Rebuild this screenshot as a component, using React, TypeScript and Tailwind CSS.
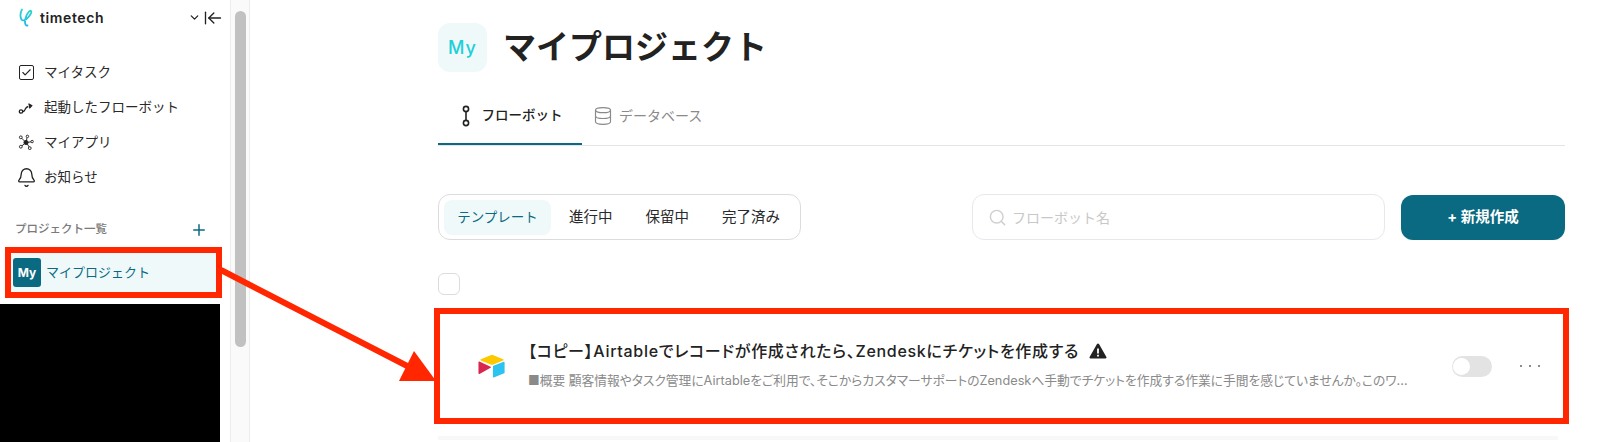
import { Bell, Check, Database, Plus, Search, ChevronDown, ArrowLeftToLine } from 'lucide-react';

const font = { fontFamily: 'Inter, "Noto Sans CJK JP", sans-serif' };

function FlowIcon() {
  return (
    <svg width="16" height="16" viewBox="0 0 16 16" fill="none" stroke="#222" strokeWidth="1.3">
      <circle cx="3" cy="11.5" r="1.7" />
      <path d="M4.7 11.5c1.6 0 2-1 2.6-2.4.5-1.2 1-2.1 3-2.6" />
      <path d="M10.5 3.8l3.2 1.8-2.4 2.6" fill="#222" />
    </svg>
  );
}

function AppsIcon() {
  return (
    <svg width="17" height="17" viewBox="0 0 17 17" fill="none" stroke="#222" strokeWidth="1">
      <circle cx="8.5" cy="8.5" r="2.2" fill="#222" />
      <circle cx="3" cy="3" r="1.5" />
      <circle cx="10" cy="2" r="1.3" />
      <circle cx="15" cy="7.5" r="1.3" />
      <circle cx="12.5" cy="14.5" r="1.5" />
      <circle cx="3" cy="13" r="1.5" />
      <path d="M4 4l3 3M9.5 3.3l-.5 3.5M13.8 7.8l-3.2.5M11.8 13.2l-2-3.2M4.2 12l2.8-2.2" />
    </svg>
  );
}

function NavRow({ icon, label }: { icon: React.ReactNode; label: string }) {
  return (
    <div className="flex h-[35px] items-center text-[13.5px] text-[#2a2a2a]">
      <span className="flex w-[16px] justify-center">{icon}</span>
      <span className="ml-[10px]">{label}</span>
    </div>
  );
}

function Sidebar() {
  return (
    <aside className="flex w-[230px] shrink-0 flex-col">
      <div className="flex h-[35px] items-center pl-[19px] pr-[7px]">
        <svg width="15" height="19" viewBox="0 0 15 19" fill="none" strokeWidth="1.8" strokeLinecap="round">
          <defs>
            <linearGradient id="logo" x1="0" y1="0" x2="0" y2="1">
              <stop offset="0" stopColor="#2fd6c8" />
              <stop offset="1" stopColor="#1fb8ea" />
            </linearGradient>
          </defs>
          <path
            d="M3 1.5C1 5 1 9.5 2.5 11.5c1.5 2 4.5.5 7-2.5 2-2.4 3.5-5 2.6-6-.9-1-3 1-4.6 4.5C6 11 5.5 14 6.5 16.5c.3.8 1 1.2 2 1"
            stroke="url(#logo)"
          />
        </svg>
        <span className="ml-[6px] text-[14px] font-semibold tracking-[0.6px] text-[#222]">timetech</span>
        <ChevronDown className="ml-auto text-[#222]" size={13} strokeWidth={2.4} />
        <ArrowLeftToLine className="ml-[2px]" size={20} strokeWidth={1.6} color="#222" />
      </div>
      <nav className="mt-[20px] flex flex-col pl-[18px]">
        <NavRow
          icon={
            <span className="flex h-[15px] w-[15px] items-center justify-center rounded-[2px] border-[1.5px] border-[#222]">
              <Check size={11} strokeWidth={2.4} color="#222" />
            </span>
          }
          label="マイタスク"
        />
        <NavRow icon={<FlowIcon />} label="起動したフローボット" />
        <NavRow icon={<AppsIcon />} label="マイアプリ" />
        <NavRow icon={<Bell className="shrink-0" size={21} strokeWidth={1.5} color="#222" />} label="お知らせ" />
      </nav>
      <div className="mt-[25px] flex h-[20px] items-center justify-between pl-[15px] pr-[22px]">
        <span className="text-[11.5px] font-medium text-[#7a7a7a]">プロジェクト一覧</span>
        <Plus size={18} strokeWidth={2} color="#0a6a82" />
      </div>
      <div className="ml-[5px] mt-[7px] flex h-[51px] w-[217px] items-center border-[6px] border-[#ff2600] bg-[#f0f9fa] pl-[2px]">
        <span className="flex h-[29px] w-[28px] items-center justify-center rounded-[3px] bg-[#0a6a82] text-[12px] font-bold text-white">My</span>
        <span className="ml-[5px] text-[13px] text-[#0a6a82]">マイプロジェクト</span>
      </div>
      <div className="mt-[6px] w-[220px] flex-1 bg-black" />
    </aside>
  );
}

function ScrollTrack() {
  return (
    <div className="flex w-[20px] shrink-0 justify-center border-x border-[#ececec] bg-[#fafafa] pt-[11px]">
      <div className="h-[336px] w-[11px] rounded-full bg-[#c1c1c1]" />
    </div>
  );
}

function Tabs() {
  return (
    <div className="mt-[28px] flex h-[46px] border-b border-[#e5e5e5]">
      <div className="flex w-[144px] items-center justify-center gap-[11px] border-b-[2px] border-[#0a6a82] pb-[12px] pl-[3px] text-[13.5px] font-medium text-[#222]">
        <svg width="10" height="22" viewBox="0 0 10 22" fill="none" stroke="#222" strokeWidth="1.6">
          <circle cx="5" cy="4" r="2.6" />
          <circle cx="5" cy="18" r="2.6" />
          <path d="M5 6.6v8.8" />
        </svg>
        フローボット
      </div>
      <div className="ml-[11px] flex items-center gap-[6px] pb-[14px] text-[14px] text-[#8a8a8a]">
        <Database size={20} strokeWidth={1.4} color="#8a8a8a" />
        データベース
      </div>
    </div>
  );
}

function Toolbar() {
  return (
    <div className="mt-[48px] flex h-[46px] items-center">
      <div className="flex h-[46px] w-[363px] items-center rounded-[12px] border border-[#dcdcdc] px-[5px] text-[14.5px] text-[#2a2a2a]">
        <span className="flex h-[35px] w-[107px] items-center justify-center rounded-[8px] bg-[#f0f9fa] text-[13.5px] text-[#0a6a82]">テンプレート</span>
        <span className="ml-[18px]">進行中</span>
        <span className="ml-[33px]">保留中</span>
        <span className="ml-[33px]">完了済み</span>
      </div>
      <div className="ml-[171px] flex h-[46px] w-[413px] items-center rounded-[12px] border border-[#e6e8ec] pl-[15px] text-[14px] text-[#c8c8c8]">
        <Search size={19} strokeWidth={1.8} color="#cfcfcf" />
        <span className="ml-[5px]">フローボット名</span>
      </div>
      <button className="ml-[16px] flex h-[45px] w-[164px] items-center justify-center rounded-[12px] bg-[#0a6a82] text-[14.5px] font-bold text-white">
        + 新規作成
      </button>
    </div>
  );
}

function AirtableLogo() {
  return (
    <svg className="shrink-0" width="28" height="28" viewBox="0 0 30 30">
      <path d="M13.5 3.5 3 7.8c-.6.3-.6 1.1 0 1.4l10.5 4.2c1 .4 2 .4 3 0L27 9.2c.6-.3.6-1.1 0-1.4L16.5 3.5c-1-.4-2-.4-3 0z" fill="#fcc800" />
      <path d="M16 15.5v11c0 .5.5.9 1 .7l11-4.3c.3-.1.5-.4.5-.7v-11c0-.5-.5-.9-1-.7l-11 4.3c-.3.1-.5.4-.5.7z" fill="#2dc3f0" />
      <path d="M13.5 15.8 1.5 10.3c-.5-.2-1 .1-1 .7v11.8c0 .6.6 1 1.1.7l11.9-6.6c.5-.3.5-.9 0-1.1z" fill="#d9264f" />
    </svg>
  );
}

function WarningIcon() {
  return (
    <svg className="ml-[10px] shrink-0" width="18" height="16" viewBox="0 0 18 16">
      <path d="M8 1 .6 14c-.4.7.1 1.5.9 1.5h15c.8 0 1.3-.8.9-1.5L10 1C9.6.3 8.4.3 8 1z" fill="#222" />
      <path d="M9 5.5v5" stroke="#fff" strokeWidth="1.8" />
      <path d="M9 11.8v1.8" stroke="#fff" strokeWidth="1.8" />
    </svg>
  );
}

function FlowCard() {
  return (
    <div className="-ml-[4px] mt-[13px] flex h-[116px] w-[1135px] items-center border-[6px] border-[#ff2600] bg-white pl-[38px]">
      <AirtableLogo />
      <div className="ml-[22px] min-w-0 flex-1 pb-[2px] [font-feature-settings:'palt']">
        <div className="flex items-center whitespace-nowrap text-[16px] font-medium leading-[20px] tracking-[0.7px] text-[#222]">
          【コピー】Airtableでレコードが作成されたら、Zendeskにチケットを作成する
          <WarningIcon />
        </div>
        <p className="mt-[12px] whitespace-nowrap text-[12.75px] leading-[16px] text-[#8a8a8a]">
          ■概要 顧客情報やタスク管理にAirtableをご利用で、そこからカスタマーサポートのZendeskへ手動でチケットを作成する作業に手間を感じていませんか。このワ...
        </p>
      </div>
      <span className="flex h-[21px] w-[40px] shrink-0 items-center rounded-full bg-[#e3e3e3] pl-[1px]">
        <span className="h-[17px] w-[17px] rounded-full bg-white" />
      </span>
      <span className="ml-[28px] mr-[23px] flex w-[20px] shrink-0 justify-between">
        <span className="h-[2px] w-[2px] rounded-full bg-[#666]" />
        <span className="h-[2px] w-[2px] rounded-full bg-[#666]" />
        <span className="h-[2px] w-[2px] rounded-full bg-[#666]" />
      </span>
    </div>
  );
}

export default function App() {
  return (
    <div className="relative flex h-[442px] w-[1600px] overflow-hidden bg-white" style={font}>
      <Sidebar />
      <ScrollTrack />
      <main className="min-w-0 flex-1 pl-[188px] pr-[35px] pt-[23px]">
        <div className="flex items-center">
          <span className="flex h-[49px] w-[49px] items-center justify-center rounded-[12px] bg-[#f0f9fa] text-[18px] font-medium tracking-[1px] text-[#20cfd8]">My</span>
          <h1 className="ml-[16px] text-[33px] font-bold leading-[49px] text-[#222]">マイプロジェクト</h1>
        </div>
        <Tabs />
        <Toolbar />
        <div className="mt-[33px] h-[22px] w-[22px] rounded-[6px] border border-[#dcdcdc]" />
        <FlowCard />
        <div className="mt-[12px] h-[4px] w-[1120px] bg-[#f8f8f8]" />
      </main>
      <svg className="pointer-events-none absolute left-0 top-0" width="1600" height="442" viewBox="0 0 1600 442">
        <path d="M221 270 L415 370" stroke="#ff2600" strokeWidth="6" />
        <path d="M414 351 L436 381 L399 381 Z" fill="#ff2600" />
      </svg>
    </div>
  );
}
